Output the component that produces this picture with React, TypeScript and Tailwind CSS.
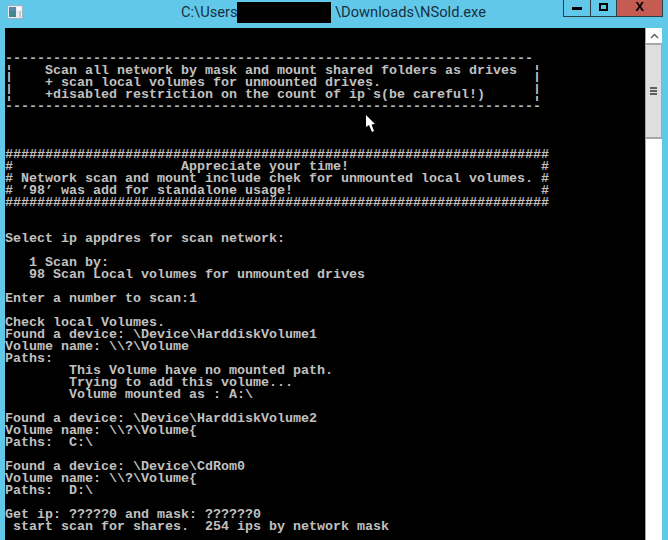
const lines = [
  "",
  "",
  "-".repeat(66),
  "¦    Scan all network by mask and mount shared folders as drives".padEnd(66) + "¦",
  "¦    + scan local volumes for unmounted drives.".padEnd(66) + "¦",
  "¦    +disabled restriction on the count of ip`s(be careful!)".padEnd(66) + "¦",
  "-".repeat(67),
  "",
  "",
  "",
  "#".repeat(68),
  "#                     Appreciate your time!".padEnd(67) + "#",
  "# Network scan and mount include chek for unmounted local volumes. #",
  "# ’98’ was add for standalone usage!".padEnd(67) + "#",
  "#".repeat(68),
  "",
  "",
  "Select ip appdres for scan network:",
  "",
  "   1 Scan by:",
  "   98 Scan Local volumes for unmounted drives",
  "",
  "Enter a number to scan:1",
  "",
  "Check local Volumes.",
  "Found a device: \\Device\\HarddiskVolume1",
  "Volume name: \\\\?\\Volume",
  "Paths:",
  "        This Volume have no mounted path.",
  "        Trying to add this volume...",
  "        Volume mounted as : A:\\",
  "",
  "Found a device: \\Device\\HarddiskVolume2",
  "Volume name: \\\\?\\Volume{",
  "Paths:  C:\\",
  "",
  "Found a device: \\Device\\CdRom0",
  "Volume name: \\\\?\\Volume{",
  "Paths:  D:\\",
  "",
  "Get ip: ?????0 and mask: ??????0",
  " start scan for shares.  254 ips by network mask",
];

function AppIcon() {
  return (
    <svg width="16" height="14" viewBox="0 0 16 14" className="shrink-0">
      <rect x="0.5" y="0.5" width="15" height="13" fill="#e8eef2" stroke="#9fb4c0" />
      <rect x="2" y="2" width="7" height="10" fill="#3f8a8c" />
      <rect x="2" y="2" width="7" height="4" fill="#5a86b0" />
      <rect x="10" y="2" width="4" height="3" fill="#ffffff" />
      <rect x="12" y="6" width="2" height="6" fill="#b8d0c8" />
    </svg>
  );
}

export default function App() {
  return (
    <div className="w-[668px] h-[540px] overflow-hidden flex flex-col bg-[#62c8ea]">
      <div className="h-[28px] shrink-0 flex items-start">
        <div className="mt-[5px] ml-[7px]">
          <AppIcon />
        </div>
        <div className="ml-[158px] h-[24px] flex items-center text-[#16323f] text-[14.7px] whitespace-pre font-['Roboto',sans-serif]">
          <span className="w-[56px] mt-[1px]">C:\Users\</span>
          <span className="w-[94px] h-[21px] bg-black" />
          <span className="ml-[4px] mt-[1px]">\Downloads\NSold.exe</span>
        </div>
        <div className="ml-auto mr-[5px] flex h-[17px] border-x border-b border-[#2c3e48]">
          <div className="w-[27px] flex items-center justify-center border-r border-[#2c3e48]">
            <div className="w-[10px] h-[3px] bg-black mt-[1px]" />
          </div>
          <div className="w-[26px] flex items-center justify-center border-r border-[#2c3e48]">
            <div className="w-[9px] h-[8px] border-2 border-black mt-[-2px]" />
          </div>
          <div className="w-[45px] flex items-center justify-center bg-[#c45c52]">
            <span className="text-black text-[13px] leading-none font-bold font-['Liberation_Sans',sans-serif] mt-[-3px]">X</span>
          </div>
        </div>
      </div>

      <div className="flex-1 flex min-h-0 pl-[5px] pr-[6px]">
        <div className="relative flex-1 bg-black overflow-hidden">
          <pre className="pt-[1px] text-[#c0c0c0] text-[13.33px] leading-[12px] font-bold font-['Liberation_Mono',monospace]">
            {lines.join("\n")}
          </pre>
          <svg width="12" height="20" viewBox="0 0 12 20" className="absolute left-[360px] top-[86px]">
            <path d="M1 1 L1 13 L4 11 L7 18 L9 17 L6.5 10.5 L10 10 Z" fill="#ffffff" />
          </svg>
        </div>
        <div className="w-[17px] shrink-0 flex flex-col bg-white border-l border-[#a8a8a8]">
          <div className="h-[17px] border-b-2 border-[#a8a8a8] flex items-center justify-center">
            <svg width="9" height="6" viewBox="0 0 9 6">
              <path d="M1 5 L4.5 1.5 L8 5" fill="none" stroke="#606060" strokeWidth="1.5" />
            </svg>
          </div>
          <div className="h-[94px] bg-[#dedede] border-b-2 border-r border-[#a8a8a8] flex flex-col items-center justify-center gap-[1px]">
            <div className="w-[7px] h-[2px] bg-[#606060]" />
            <div className="w-[7px] h-[2px] bg-[#606060]" />
            <div className="w-[7px] h-[2px] bg-[#606060]" />
          </div>
        </div>
      </div>
    </div>
  );
}
